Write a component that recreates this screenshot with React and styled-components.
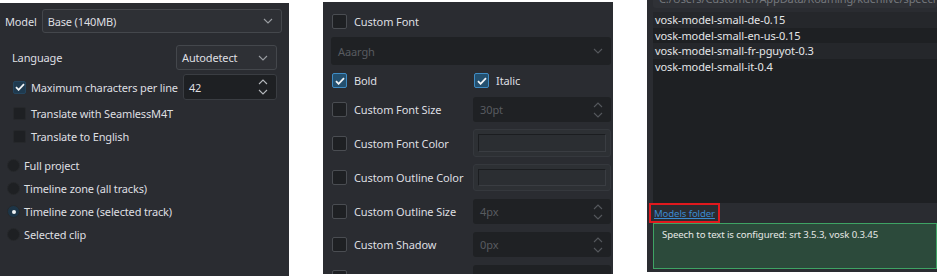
import styled, { createGlobalStyle } from "styled-components";

const GlobalStyle = createGlobalStyle`
  html, body {
    margin: 0;
    padding: 0;
    background: #ffffff;
  }
  body {
    font-family: "Noto Sans", "Open Sans", sans-serif;
    -webkit-font-smoothing: antialiased;
  }
`;

const Page = styled.div`
  display: flex;
  align-items: flex-start;
  gap: 34px;
  width: 937px;
  height: 276px;
  overflow: hidden;
`;

const Panel = styled.div`
  flex: none;
  box-sizing: border-box;
  width: ${(p) => p.$width}px;
  height: ${(p) => p.$height}px;
  margin-top: ${(p) => p.$top}px;
  background: #2a2c31;
  color: #dedfe1;
  display: flex;
  flex-direction: column;
  overflow: hidden;
`;

/* ---------- shared bits ---------- */

const Chevron = ({ color = "#9a9da2" }) => (
  <svg width="10" height="6" viewBox="0 0 10 6" fill="none">
    <path d="M1 1l4 4 4-4" stroke={color} strokeWidth="1.1" />
  </svg>
);

const SpinArrows = ({ color = "#8a8d92" }) => (
  <svg width="10" height="18" viewBox="0 0 10 18" fill="none">
    <path d="M1 6l4-4 4 4" stroke={color} strokeWidth="1.1" />
    <path d="M1 12l4 4 4-4" stroke={color} strokeWidth="1.1" />
  </svg>
);

const Check = () => (
  <svg width="10" height="8" viewBox="0 0 10 8" fill="none">
    <path d="M1 4.2l2.6 2.6L9 1.2" stroke="#f2f4f6" strokeWidth="1.8" />
  </svg>
);

const Box = styled.span`
  flex: none;
  box-sizing: border-box;
  width: ${(p) => p.$size}px;
  height: ${(p) => p.$size}px;
  border-radius: 2px;
  display: inline-flex;
  align-items: center;
  justify-content: center;
  background: ${(p) => (p.$checked ? p.$on : "#1e2023")};
  border: 1px solid ${(p) => (p.$checked ? p.$onBorder : p.$border)};
`;

const CheckBox = ({ checked, size = 13, border = "#26282b", on = "#1f3a4f", onBorder = "#24455e" }) => (
  <Box $checked={checked} $size={size} $border={border} $on={on} $onBorder={onBorder}>
    {checked && <Check />}
  </Box>
);

/* ---------- left panel ---------- */

const LeftBody = styled.div`
  display: flex;
  flex-direction: column;
  padding: 6px 6px 0 5px;
  font-size: 11px;
  letter-spacing: -0.15px;
`;

const FormRow = styled.div`
  display: flex;
  align-items: center;
  height: ${(p) => p.$h}px;
  margin-top: ${(p) => p.$mt || 0}px;
  padding-left: ${(p) => p.$indent || 0}px;
  padding-right: ${(p) => p.$right || 0}px;
  gap: ${(p) => p.$gap || 5}px;
`;

const Label = styled.span`
  flex: 1;
  white-space: nowrap;
`;

const Combo = styled.div`
  box-sizing: border-box;
  width: ${(p) => p.$w}px;
  height: 100%;
  display: flex;
  align-items: center;
  justify-content: space-between;
  padding: 0 8px 0 5px;
  background: ${(p) => p.$bg || "#2e3035"};
  border: 1px solid ${(p) => p.$border || "#44474c"};
  border-radius: 3px;
  color: ${(p) => p.$color || "#dedfe1"};
`;

const Radio = styled.span`
  flex: none;
  box-sizing: border-box;
  width: 13px;
  height: 13px;
  border-radius: 50%;
  background: ${(p) => (p.$checked ? "#1d3547" : "#1e2023")};
  border: 1px solid #26282b;
  display: inline-flex;
  align-items: center;
  justify-content: center;

  &::after {
    content: "";
    display: ${(p) => (p.$checked ? "block" : "none")};
    width: 4px;
    height: 4px;
    border-radius: 50%;
    background: #f0f2f4;
  }
`;

const RadioRow = styled.div`
  display: flex;
  align-items: center;
  gap: 4px;
  height: 23px;
  padding-left: 2px;
`;

function LeftPanel() {
  return (
    <Panel $width={289} $height={273} $top={3}>
      <LeftBody>
        <FormRow $h={24}>
          <span>Model</span>
          <Combo $w={240}>
            Base (140MB)
            <Chevron />
          </Combo>
        </FormRow>
        <FormRow $h={25} $mt={12} $indent={7} $right={6}>
          <Label>Language</Label>
          <Combo $w={101}>
            Autodetect
            <Chevron />
          </Combo>
        </FormRow>
        <FormRow $h={26} $mt={4} $indent={8} $right={6}>
          <CheckBox checked />
          <Label>Maximum characters per line</Label>
          <Combo $w={97} $bg="#1e2023" $border="#3a3d42">
            42
            <SpinArrows color="#b5b8bc" />
          </Combo>
        </FormRow>
        <FormRow $h={24} $mt={1} $indent={8}>
          <CheckBox />
          <Label>Translate with SeamlessM4T</Label>
        </FormRow>
        <FormRow $h={23} $indent={8}>
          <CheckBox />
          <Label>Translate to English</Label>
        </FormRow>
        <div style={{ height: 6 }} />
        <RadioRow>
          <Radio />
          Full project
        </RadioRow>
        <RadioRow>
          <Radio />
          Timeline zone (all tracks)
        </RadioRow>
        <RadioRow>
          <Radio $checked />
          Timeline zone (selected track)
        </RadioRow>
        <RadioRow>
          <Radio />
          Selected clip
        </RadioRow>
      </LeftBody>
    </Panel>
  );
}

/* ---------- middle panel ---------- */

const MidBody = styled.div`
  display: flex;
  flex-direction: column;
  padding: 8px 2px 0 8px;
  font-size: 11px;
  letter-spacing: -0.1px;
`;

const GridRow = styled.div`
  display: grid;
  grid-template-columns: 142px 138px;
  align-items: center;
  height: ${(p) => p.$h}px;
  margin-top: ${(p) => p.$mt || 0}px;
`;

const CheckLabel = styled.div`
  display: flex;
  align-items: center;
  gap: 7px;
  white-space: nowrap;
  padding-left: 1px;
`;

const FieldBox = styled.div`
  box-sizing: border-box;
  height: ${(p) => (p.$h ? `${p.$h}px` : "100%")};
  margin-top: ${(p) => p.$mt || 0}px;
  display: flex;
  align-items: center;
  justify-content: space-between;
  padding: 0 8px 0 7px;
  background: #1f2124;
  border-radius: 3px;
  color: #585b60;
`;

const ColorButton = styled.div`
  box-sizing: border-box;
  height: 100%;
  padding: 4px;
  background: #2d3034;
  border: 1px solid #35383d;
  border-radius: 3px;
  display: flex;
`;

const ColorSwatch = styled.div`
  flex: 1;
  background: #2b2e32;
  border: 1px solid #1b1d20;
  border-right-color: #3a3d42;
  border-bottom-color: #3a3d42;
`;

const midBox = { size: 15, border: "#4a4d52", on: "#24506f", onBorder: "#3f8cc4" };

const MidCheck = ({ checked, children }) => (
  <CheckLabel>
    <CheckBox checked={checked} {...midBox} />
    {children}
  </CheckLabel>
);

function MiddlePanel() {
  return (
    <Panel $width={290} $height={272} $top={2}>
      <MidBody>
        <GridRow $h={22}>
          <MidCheck>Custom Font</MidCheck>
        </GridRow>
        <FieldBox $h={28} $mt={5}>
          Aaargh
          <Chevron color="#55585d" />
        </FieldBox>
        <GridRow $h={23} $mt={4}>
          <MidCheck checked>Bold</MidCheck>
          <MidCheck checked>Italic</MidCheck>
        </GridRow>
        <GridRow $h={25} $mt={5}>
          <MidCheck>Custom Font Size</MidCheck>
          <FieldBox>
            30pt
            <SpinArrows color="#55585d" />
          </FieldBox>
        </GridRow>
        <GridRow $h={28} $mt={7}>
          <MidCheck>Custom Font Color</MidCheck>
          <ColorButton>
            <ColorSwatch />
          </ColorButton>
        </GridRow>
        <GridRow $h={27} $mt={7}>
          <MidCheck>Custom Outline Color</MidCheck>
          <ColorButton>
            <ColorSwatch />
          </ColorButton>
        </GridRow>
        <GridRow $h={25} $mt={8}>
          <MidCheck>Custom Outline Size</MidCheck>
          <FieldBox>
            4px
            <SpinArrows color="#55585d" />
          </FieldBox>
        </GridRow>
        <GridRow $h={25} $mt={8}>
          <MidCheck>Custom Shadow</MidCheck>
          <FieldBox>
            0px
            <SpinArrows color="#55585d" />
          </FieldBox>
        </GridRow>
        <GridRow $h={25} $mt={8}>
          <MidCheck />
          <FieldBox />
        </GridRow>
      </MidBody>
    </Panel>
  );
}

/* ---------- right panel ---------- */

const RightBody = styled.div`
  display: flex;
  flex-direction: column;
  height: 100%;
  padding-left: 6px;
  font-size: 11px;
  letter-spacing: -0.1px;
`;

const PathField = styled.div`
  box-sizing: border-box;
  height: 20px;
  margin-top: -12px;
  padding: 0 6px;
  display: flex;
  align-items: center;
  background: #2f3136;
  border-radius: 3px;
  color: #74777c;
  white-space: nowrap;
`;

const ModelList = styled.div`
  margin-top: 4px;
  height: 191px;
  background: #1e2023;
  display: flex;
  flex-direction: column;
`;

const ModelItem = styled.div`
  height: 15.5px;
  line-height: 15.5px;
  padding-left: 2px;
  color: #e4e5e7;
  background: ${(p) => (p.$alt ? "#1e2023" : "#25272b")};
`;

const LinkBox = styled.div`
  box-sizing: border-box;
  width: 71px;
  height: 20px;
  margin-left: -4px;
  border: 2px solid #e0191e;
  display: flex;
  align-items: center;
  padding-left: 3px;
  font-size: 9.6px;
`;

const FolderLink = styled.a`
  color: #3b8ad0;
  text-decoration: underline;
  white-space: nowrap;
`;

const StatusBox = styled.div`
  box-sizing: border-box;
  height: 46px;
  padding: 4px 8px;
  background: #2c4a3b;
  border: 1px solid #3ea364;
  color: #e6e8e6;
  font-size: 9.6px;
`;

const models = [
  "vosk-model-small-de-0.15",
  "vosk-model-small-en-us-0.15",
  "vosk-model-small-fr-pguyot-0.3",
  "vosk-model-small-it-0.4",
];

function RightPanel() {
  return (
    <Panel $width={290} $height={272} $top={0}>
      <RightBody>
        <PathField>C:/Users/Customer/AppData/Roaming/kdenlive/speechmodels</PathField>
        <ModelList>
          {models.map((m, i) => (
            <ModelItem key={m} $alt={i % 2 === 1}>
              {m}
            </ModelItem>
          ))}
        </ModelList>
        <LinkBox>
          <FolderLink>Models folder</FolderLink>
        </LinkBox>
        <StatusBox>Speech to text is configured: srt 3.5.3, vosk 0.3.45</StatusBox>
      </RightBody>
    </Panel>
  );
}

export default function App() {
  return (
    <>
      <GlobalStyle />
      <Page>
        <LeftPanel />
        <MiddlePanel />
        <RightPanel />
      </Page>
    </>
  );
}
